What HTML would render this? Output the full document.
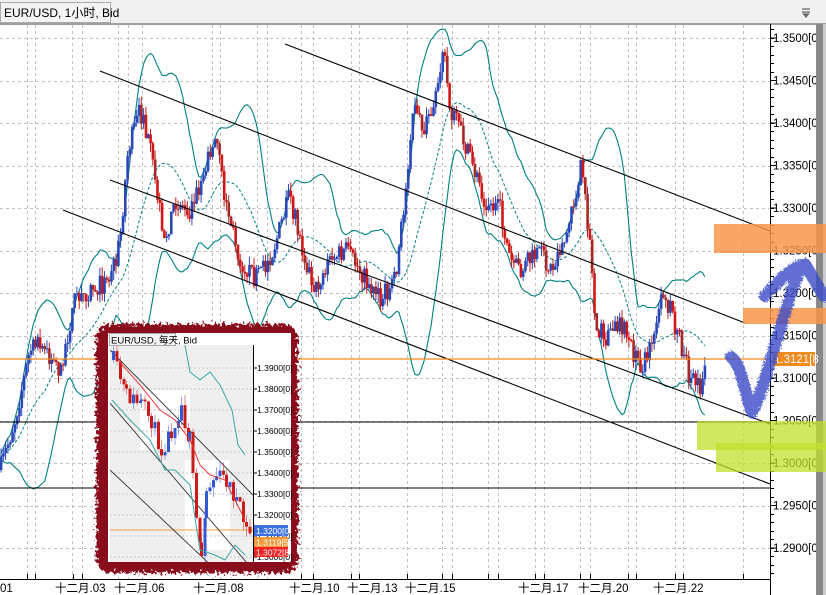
<!DOCTYPE html>
<html><head><meta charset="utf-8"><style>
html,body{margin:0;padding:0;width:826px;height:595px;overflow:hidden;background:#fff;font-family:"Liberation Sans","Noto Sans CJK SC",sans-serif}
svg{display:block}
text{font-family:"Liberation Sans","Noto Sans CJK SC",sans-serif}
</style></head><body>
<svg id="s" width="826" height="595" xmlns="http://www.w3.org/2000/svg">
<defs>
<filter id="rough" x="-10%" y="-10%" width="120%" height="120%">
<feTurbulence type="fractalNoise" baseFrequency="0.35" numOctaves="3" seed="3"/>
<feDisplacementMap in="SourceGraphic" scale="12"/>
</filter>
<filter id="chalk" x="-10%" y="-10%" width="120%" height="120%">
<feTurbulence type="fractalNoise" baseFrequency="0.6" numOctaves="2" seed="5"/>
<feDisplacementMap in="SourceGraphic" scale="6"/>
</filter>
<clipPath id="cc"><rect x="0" y="24" width="770" height="556"/></clipPath>
<clipPath id="ic"><rect x="110" y="345" width="143" height="217"/></clipPath>
</defs>
<rect x="0" y="0" width="826" height="23" fill="#f0f0f0"/>
<rect x="0.5" y="2.5" width="110" height="20" fill="#f4f4f4" stroke="#aaa"/>
<text x="4" y="17" font-size="12" fill="#000">EUR/USD, 1小时, Bid</text>
<rect x="0" y="23" width="826" height="2" fill="#a0a0a0"/>
<path d="M802 9h8M802 12h8M803.5 14h5l-2.5 3z" stroke="#666" fill="#666" stroke-width="1.2"/>
<g id="grid" stroke="#c0c0c0" stroke-dasharray="3,3" stroke-width="1"></g>
<g clip-path="url(#cc)">
<g id="bands"></g>
<g id="candles"></g>
<g stroke="#000" stroke-width="1.1" fill="none">
<line x1="100" y1="71" x2="745" y2="323"/>
<line x1="285" y1="44" x2="770" y2="231"/>
<line x1="110" y1="180" x2="770" y2="424"/>
<line x1="63" y1="210" x2="770" y2="484"/>
<line x1="0" y1="422" x2="770" y2="422"/>
<line x1="0" y1="488" x2="770" y2="488"/>
</g>
<line x1="0" y1="359" x2="770" y2="359" stroke="#f08a1c" stroke-width="1.3"/>
</g>
<line x1="770.5" y1="24" x2="770.5" y2="595" stroke="#000"/>
<line x1="0" y1="579.5" x2="770" y2="579.5" stroke="#000"/>
<g id="axis" font-size="11.5" fill="#000"></g>
<rect x="816" y="24" width="7" height="571" fill="#888"/>
<rect x="823" y="24" width="3" height="571" fill="#ccc"/>
<rect x="773" y="352" width="42" height="14" fill="#f08a1c"/>
<text x="774" y="363" font-size="11.5" fill="#fff">1.3121[8</text>
<rect x="714" y="224" width="112" height="29" fill="#f7954a" opacity="0.85"/>
<rect x="743" y="308" width="83" height="16" fill="#f7954a" opacity="0.85"/>
<rect x="697" y="421" width="129" height="29" fill="#bde22c" opacity="0.75"/>
<rect x="716" y="443" width="110" height="29" fill="#bde22c" opacity="0.75"/>
<g filter="url(#chalk)" stroke="#3a4bc8" stroke-width="12" fill="none" stroke-linecap="round" stroke-linejoin="round" opacity="0.8">
<path d="M731 357 C742 365 745 395 752 412 C765 390 780 320 800 268"/>
<path d="M765 296 C780 280 790 268 805 264 C812 275 818 288 824 296"/>
</g>
<rect x="96" y="324" width="202" height="249" rx="14" fill="#8a0f1e" filter="url(#rough)"/>
<rect x="108" y="333" width="183" height="229" fill="#fff"/>
<rect x="110" y="345" width="143" height="217" fill="#efefef"/>
<rect x="140" y="390" width="50" height="60" fill="#fff"/>
<rect x="185" y="460" width="45" height="90" fill="#fff"/>
<g id="inset" clip-path="url(#ic)"></g>
<rect x="109.5" y="333.5" width="66" height="12" fill="#f4f4f4" stroke="#aaa"/>
<text x="111" y="343.5" font-size="9.5">EUR/USD, 每天, Bid</text>
<line x1="253.5" y1="345" x2="253.5" y2="562" stroke="#000"/>
<g id="iaxis" font-size="8.5"></g>
<rect x="254" y="525" width="34" height="11" fill="#3d6fe0"/>
<text x="256" y="534" font-size="8.5" fill="#fff">1.3200[0</text>
<rect x="254" y="537" width="34" height="10" fill="#f59a3a"/>
<text x="256" y="545.5" font-size="8.5" fill="#fff">1.3119[5</text>
<rect x="254" y="547" width="34" height="10" fill="#e22"/>
<text x="256" y="555.5" font-size="8.5" fill="#fff">1.3072[8</text>
</svg>
<script>
var NS="http://www.w3.org/2000/svg";
function el(t,a,p){var e=document.createElementNS(NS,t);for(var k in a)e.setAttribute(k,a[k]);p.appendChild(e);return e;}
var seed=7;function rnd(){seed=(seed*16807)%2147483647;return seed/2147483647;}
var g=document.getElementById('grid');
[27,35,72,82,118,128,142,212,220,257,267,301,313,351,359,407,442,452,488,498,535,544,580,590,628,636,675,683,743].forEach(function(x){el('line',{x1:x+.5,y1:25,x2:x+.5,y2:579},g);});
for(var i=0;i<13;i++){var y=Math.round(38+i*42.5)+.5;el('line',{x1:0,y1:y,x2:770,y2:y},g);}
var ax=document.getElementById('axis');
for(var i=0;i<13;i++){var y=38+i*42.5;var p=(1.35-i*0.005).toFixed(4);
 var t=el('text',{x:773,y:y+4},ax);t.textContent=p+"[0]";
 el('line',{x1:770,y1:y,x2:776,y2:y,stroke:'#000'},ax);}
for(var y=29;y<579;y+=8.5)el('line',{x1:770,y1:Math.round(y)+.5,x2:774,y2:Math.round(y)+.5,stroke:'#000'},ax);
[27,35,73,82,301,313,351,359,407,442,452,488,498,535,544,580,590,628,636,675,683,743].forEach(function(x){el('line',{x1:x+.5,y1:574,x2:x+.5,y2:580,stroke:'#000'},ax);});
[[0,"01"],[55,"十二月.03"],[114,"十二月.06"],[193,"十二月.08"],[289,"十二月.10"],[347,"十二月.13"],[405,"十二月.15"],[518,"十二月.17"],[578,"十二月.20"],[653,"十二月.22"]].forEach(function(a){var t=el('text',{x:a[0],y:592},ax);t.textContent=a[1];});
var K=[[0,470],[15,420],[30,350],[40,345],[60,370],[75,300],[90,290],[110,280],[120,240],[128,150],[140,110],[150,150],[165,240],[175,200],[190,210],[205,170],[215,130],[225,200],[240,260],[255,280],[270,260],[290,195],[300,240],[315,290],[330,260],[345,250],[360,270],[380,300],[395,280],[405,200],[412,110],[425,130],[435,100],[443,45],[450,110],[460,130],[470,160],[485,200],[500,210],[510,260],[520,270],[540,250],[550,270],[565,240],[575,200],[580,165],[590,240],[595,320],[605,340],[620,320],[640,370],[650,350],[660,300],[670,310],[680,340],[690,380],[700,390],[706,355]];
function interp(x){for(var i=1;i<K.length;i++)if(x<=K[i][0]){var a=K[i-1],b=K[i];return a[1]+(b[1]-a[1])*(x-a[0])/(b[0]-a[0]);}return K[K.length-1][1];}
var cg=document.getElementById('candles');var closes=[],xs=[];var prev=interp(0);
for(var x=1;x<=706;x+=2.3){var c=interp(x)+(rnd()-.5)*20;var o=prev;var hi=Math.min(o,c)-rnd()*9,lo=Math.max(o,c)+rnd()*9;
 var col=c<o?'#2a48b8':(rnd()<.5?'#d01818':'#a82828');
 el('line',{x1:x,y1:hi,x2:x,y2:lo,stroke:col,'stroke-width':1},cg);
 el('rect',{x:x-1.2,y:Math.min(o,c),width:2.6,height:Math.max(1,Math.abs(c-o)),fill:col},cg);
 closes.push(c);xs.push(x);prev=c;}
var bg=document.getElementById('bands');var up=[],mid=[],lw=[];var N=20;
for(var i=0;i<closes.length;i++){var s=Math.max(0,i-N+1),n=i-s+1,m=0;for(var j=s;j<=i;j++)m+=closes[j];m/=n;var v=0;for(var j=s;j<=i;j++)v+=(closes[j]-m)*(closes[j]-m);var sd=Math.sqrt(v/n);
 up.push(xs[i].toFixed(1)+","+(m-2*sd-3).toFixed(1));mid.push(xs[i].toFixed(1)+","+m.toFixed(1));lw.push(xs[i].toFixed(1)+","+(m+2*sd+3).toFixed(1));}
el('polyline',{points:up.join(' '),fill:'none',stroke:'#008080','stroke-width':1.1},bg);
el('polyline',{points:lw.join(' '),fill:'none',stroke:'#008080','stroke-width':1.1},bg);
el('polyline',{points:mid.join(' '),fill:'none',stroke:'#008080','stroke-width':1,'stroke-dasharray':'3,2'},bg);
var ig=document.getElementById('inset');var ia=document.getElementById('iaxis');
function iy(p){return 368+(1.39-p)*2100;}
for(var p=1.39;p>1.295;p-=0.01){var y=iy(p);var t=el('text',{x:257,y:y+3},ia);t.textContent=p.toFixed(4)+"[0]";el('line',{x1:253,y1:y,x2:257,y2:y,stroke:'#000'},ia);
 el('line',{x1:110,y1:y,x2:253,y2:y,stroke:'#c8c8c8','stroke-dasharray':'2,2'},ig);}
el('line',{x1:110,y1:530,x2:253,y2:530,stroke:'#f0a040'},ig);
[[110,350,253,495],[110,403,253,570],[110,470,253,605]].forEach(function(l){el('line',{x1:l[0],y1:l[1],x2:l[2],y2:l[3],stroke:'#333','stroke-width':.9},ig);});
var IK=[[112,360],[125,395],[140,405],[150,420],[160,450],[170,430],[180,405],[188,440],[195,520],[200,555],[205,490],[215,475],[225,480],[235,500],[245,530],[250,535]];
var ip=360;seed=11;
for(var k=1;k<IK.length;k++){var a=IK[k-1],b=IK[k];for(var x=a[0];x<b[0];x+=3.5){var c=a[1]+(b[1]-a[1])*(x-a[0])/(b[0]-a[0])+(rnd()-.5)*18;var col=c<ip?'#3358d0':'#cc1a1a';
 el('line',{x1:x+1.5,y1:Math.min(ip,c)-rnd()*10,x2:x+1.5,y2:Math.max(ip,c)+rnd()*10,stroke:col,'stroke-opacity':.5},ig);
 el('rect',{x:x,y:Math.min(ip,c),width:3,height:Math.max(1,Math.abs(c-ip)),fill:col},ig);ip=c;}}
el('polyline',{points:"118,360 140,385 160,410 175,420 190,440 200,465 210,475 225,480 235,500 245,520",fill:'none',stroke:'#ee3333','stroke-width':1},ig);
el('polyline',{points:"185,345 190,372 200,380 210,372 220,385 232,410 238,445 245,455",fill:'none',stroke:'#3aa6a6','stroke-width':1},ig);
el('polyline',{points:"112,400 130,420 150,440 165,470 175,470 190,485 200,550 215,555 225,560 235,545 245,555",fill:'none',stroke:'#3aa6a6','stroke-width':1},ig);
</script>
</body></html>
